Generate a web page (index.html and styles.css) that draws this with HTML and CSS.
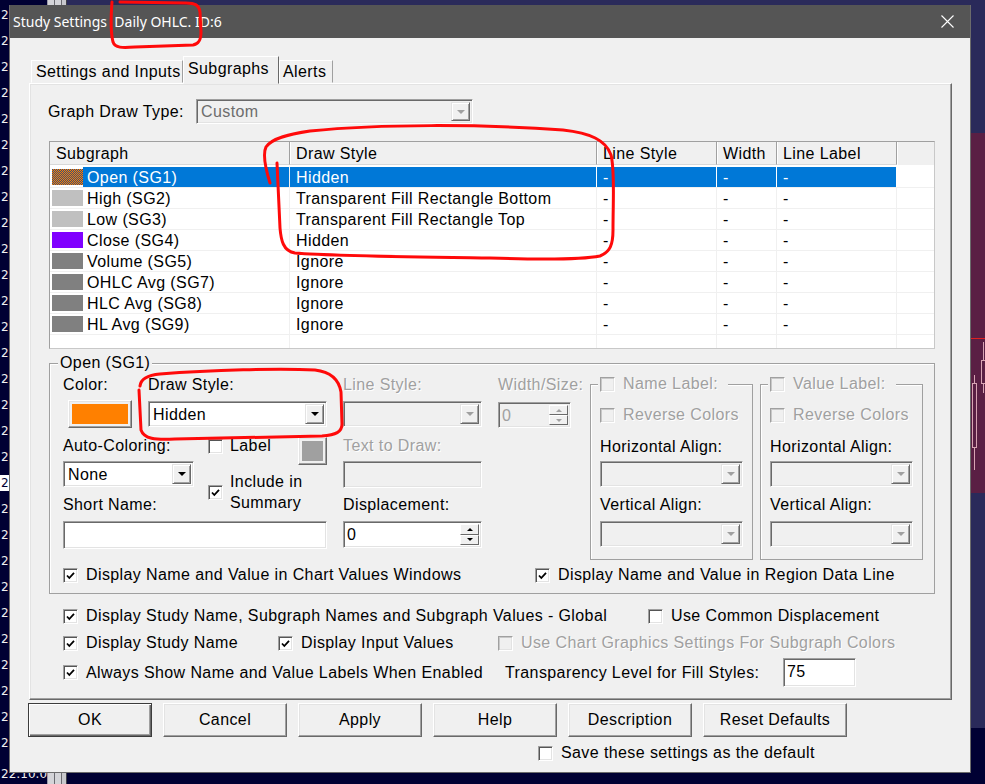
FILE: index.html
```html
<!DOCTYPE html>
<html lang="en">
<head>
    <meta charset="UTF-8">
    <title>Study Settings</title>
    <link rel="stylesheet" href="styles.css">
</head>
<body>
<div class="desktop">
    <div class="axis">
        <span>2</span><span>2</span><span>2</span><span>2</span><span>2</span><span>2</span>
        <span>2</span><span>2</span><span>2</span><span>2</span><span>2</span><span>2</span>
        <span>2</span><span>2</span><span>2</span><span>2</span><span>2</span><span>2</span>
        <span class="cur">2</span><span>2</span><span>2</span><span>2</span><span>2</span><span>2</span>
        <span>2</span><span>2</span><span>2</span><span>2</span><span>2</span>
        <span class="time">22:10.0</span>
    </div>
    <div class="splitter"></div>
    <div class="chart">
        <div class="ch-top"></div>
        <div class="ch-region">
            <svg class="candles" viewBox="0 0 918 360" preserveAspectRatio="none">
                <line x1="903" y1="205.5" x2="918" y2="205.5" stroke="#e02020" stroke-width="1"/>
                <line x1="907.5" y1="242" x2="907.5" y2="337" stroke="#d8a4b4" stroke-width="1"/>
                <rect x="905.5" y="250.5" width="4" height="64" fill="#5a1f44" stroke="#d8a4b4" stroke-width="1"/>
                <line x1="916.5" y1="209" x2="916.5" y2="260" stroke="#d8a4b4" stroke-width="1"/>
                <rect x="914.5" y="227.5" width="4" height="23" fill="#5a1f44" stroke="#d8a4b4" stroke-width="1"/>
            </svg>
        </div>
        <div class="ch-mid"></div>
        <div class="ch-axis"></div>
    </div>

    <div class="dialog">
        <div class="titlebar">
            <span class="title">Study Settings&nbsp; Daily OHLC. ID:6</span>
            <svg class="close" width="13" height="13" viewBox="0 0 13 13"><path d="M0.5 0.5 L12.5 12.5 M12.5 0.5 L0.5 12.5" stroke="#fff" stroke-width="1.1"/></svg>
        </div>
        <div class="dialog-body">
            <div class="tabs">
                <div class="tab tab-settings">Settings and Inputs</div>
                <div class="tab tab-sel">Subgraphs</div>
                <div class="tab tab-alerts">Alerts</div>
            </div>
            <div class="panel">
                <div class="draw-type">
                    <span class="dt-label">Graph Draw Type:</span>
                    <div class="combo combo-dis combo-dt"><span class="val">Custom</span><span class="drop"><i class="tri"></i></span></div>
                </div>

                <div class="list">
                    <div class="head">
                        <span class="hc c1">Subgraph</span>
                        <span class="hc c2">Draw Style</span>
                        <span class="hc c3">Line Style</span>
                        <span class="hc c4">Width</span>
                        <span class="hc c5">Line Label</span>
                    </div>
                    <div class="row sel">
                        <span class="cell c1"><i class="sw sw-open"></i><span class="nm">Open (SG1)</span></span>
                        <span class="cell c2">Hidden</span><span class="cell c3">-</span><span class="cell c4">-</span><span class="cell c5">-</span><span class="cell c6"></span>
                    </div>
                    <div class="row">
                        <span class="cell c1"><i class="sw sw-light"></i><span class="nm">High (SG2)</span></span>
                        <span class="cell c2">Transparent Fill Rectangle Bottom</span><span class="cell c3">-</span><span class="cell c4">-</span><span class="cell c5">-</span><span class="cell c6"></span>
                    </div>
                    <div class="row">
                        <span class="cell c1"><i class="sw sw-light"></i><span class="nm">Low (SG3)</span></span>
                        <span class="cell c2">Transparent Fill Rectangle Top</span><span class="cell c3">-</span><span class="cell c4">-</span><span class="cell c5">-</span><span class="cell c6"></span>
                    </div>
                    <div class="row">
                        <span class="cell c1"><i class="sw sw-purple"></i><span class="nm">Close (SG4)</span></span>
                        <span class="cell c2">Hidden</span><span class="cell c3">-</span><span class="cell c4">-</span><span class="cell c5">-</span><span class="cell c6"></span>
                    </div>
                    <div class="row">
                        <span class="cell c1"><i class="sw sw-gray"></i><span class="nm">Volume (SG5)</span></span>
                        <span class="cell c2">Ignore</span><span class="cell c3">-</span><span class="cell c4">-</span><span class="cell c5">-</span><span class="cell c6"></span>
                    </div>
                    <div class="row">
                        <span class="cell c1"><i class="sw sw-gray"></i><span class="nm">OHLC Avg (SG7)</span></span>
                        <span class="cell c2">Ignore</span><span class="cell c3">-</span><span class="cell c4">-</span><span class="cell c5">-</span><span class="cell c6"></span>
                    </div>
                    <div class="row">
                        <span class="cell c1"><i class="sw sw-gray"></i><span class="nm">HLC Avg (SG8)</span></span>
                        <span class="cell c2">Ignore</span><span class="cell c3">-</span><span class="cell c4">-</span><span class="cell c5">-</span><span class="cell c6"></span>
                    </div>
                    <div class="row">
                        <span class="cell c1"><i class="sw sw-gray"></i><span class="nm">HL Avg (SG9)</span></span>
                        <span class="cell c2">Ignore</span><span class="cell c3">-</span><span class="cell c4">-</span><span class="cell c5">-</span><span class="cell c6"></span>
                    </div>
                    <div class="row">
                        <span class="cell c1"></span><span class="cell c2"></span><span class="cell c3"></span><span class="cell c4"></span><span class="cell c5"></span><span class="cell c6"></span>
                    </div>
                </div>

                <div class="group">
                    <span class="group-title">Open (SG1)</span>
                    <div class="group-main">
                        <div class="col-a">
                            <span class="lbl lbl-color">Color:</span>
                            <span class="lbl lbl-style">Draw Style:</span>
                            <div class="color-btn"><i></i></div>
                            <div class="combo combo-style"><span class="val">Hidden</span><span class="drop"><i class="tri"></i></span></div>
                            <span class="lbl lbl-auto">Auto-Coloring:</span>
                            <div class="combo combo-auto"><span class="val">None</span><span class="drop"><i class="tri"></i></span></div>
                            <label class="chk chk-label"><span class="box"></span>Label</label>
                            <div class="gray-btn"><i></i></div>
                            <label class="chk chk-summary"><span class="box on"><svg viewBox="0 0 13 13"><path d="M3 6.5 L5.3 9 L10 3.8"/></svg></span><span>Include in<br>Summary</span></label>
                            <span class="lbl lbl-short">Short Name:</span>
                            <div class="field field-short"></div>
                        </div>
                        <div class="col-b">
                            <span class="lbl dis">Line Style:</span>
                            <div class="combo combo-dis combo-line"><span class="val"></span><span class="drop"><i class="tri"></i></span></div>
                            <span class="lbl dis lbl-text">Text to Draw:</span>
                            <div class="field field-dis field-text"></div>
                            <span class="lbl lbl-disp">Displacement:</span>
                            <div class="field spin spin-disp"><span class="val">0</span><span class="spin-btns"><i class="up"></i><i class="down"></i></span></div>
                        </div>
                        <div class="col-c">
                            <span class="lbl dis">Width/Size:</span>
                            <div class="field field-dis spin spin-width"><span class="val">0</span><span class="spin-btns"><i class="up"></i><i class="down"></i></span></div>
                        </div>
                        <div class="sub-box box-name">
                            <div class="sub-title"><label class="chk dis"><span class="box"></span>Name Label:</label></div>
                            <label class="chk dis sub-reverse"><span class="box"></span>Reverse Colors</label>
                            <span class="lbl sub-halign">Horizontal Align:</span>
                            <div class="combo combo-dis sub-combo"><span class="val"></span><span class="drop"><i class="tri"></i></span></div>
                            <span class="lbl sub-valign">Vertical Align:</span>
                            <div class="combo combo-dis sub-combo sub-combo-v"><span class="val"></span><span class="drop"><i class="tri"></i></span></div>
                        </div>
                        <div class="sub-box box-value">
                            <div class="sub-title"><label class="chk dis"><span class="box"></span>Value Label:</label></div>
                            <label class="chk dis sub-reverse"><span class="box"></span>Reverse Colors</label>
                            <span class="lbl sub-halign">Horizontal Align:</span>
                            <div class="combo combo-dis sub-combo"><span class="val"></span><span class="drop"><i class="tri"></i></span></div>
                            <span class="lbl sub-valign">Vertical Align:</span>
                            <div class="combo combo-dis sub-combo sub-combo-v"><span class="val"></span><span class="drop"><i class="tri"></i></span></div>
                        </div>
                    </div>
                    <div class="group-checks">
                        <label class="chk cell-chart"><span class="box on"><svg viewBox="0 0 13 13"><path d="M3 6.5 L5.3 9 L10 3.8"/></svg></span>Display Name and Value in Chart Values Windows</label>
                        <label class="chk"><span class="box on"><svg viewBox="0 0 13 13"><path d="M3 6.5 L5.3 9 L10 3.8"/></svg></span>Display Name and Value in Region Data Line</label>
                    </div>
                </div>

                <div class="opts">
                    <div class="opt-row opt-1">
                        <label class="chk cell-global"><span class="box on"><svg viewBox="0 0 13 13"><path d="M3 6.5 L5.3 9 L10 3.8"/></svg></span>Display Study Name, Subgraph Names and Subgraph Values - Global</label>
                        <label class="chk"><span class="box"></span>Use Common Displacement</label>
                    </div>
                    <div class="opt-row opt-2">
                        <label class="chk cell-study"><span class="box on"><svg viewBox="0 0 13 13"><path d="M3 6.5 L5.3 9 L10 3.8"/></svg></span>Display Study Name</label>
                        <label class="chk cell-input"><span class="box on"><svg viewBox="0 0 13 13"><path d="M3 6.5 L5.3 9 L10 3.8"/></svg></span>Display Input Values</label>
                        <label class="chk dis"><span class="box"></span>Use Chart Graphics Settings For Subgraph Colors</label>
                    </div>
                    <div class="opt-row opt-3">
                        <label class="chk cell-always"><span class="box on"><svg viewBox="0 0 13 13"><path d="M3 6.5 L5.3 9 L10 3.8"/></svg></span>Always Show Name and Value Labels When Enabled</label>
                        <span class="lbl lbl-trans">Transparency Level for Fill Styles:</span>
                        <div class="field field-trans">75</div>
                    </div>
                </div>
            </div>

            <div class="buttons">
                <button class="btn btn-ok">OK</button>
                <button class="btn">Cancel</button>
                <button class="btn">Apply</button>
                <button class="btn">Help</button>
                <button class="btn">Description</button>
                <button class="btn btn-reset">Reset Defaults</button>
            </div>
            <div class="save-row">
                <label class="chk"><span class="box"></span>Save these settings as the default</label>
            </div>
        </div>
    </div>

    <!-- red pen marks drawn over the screenshot -->
    <svg class="marks" width="985" height="784" viewBox="0 0 985 784">
        <path d="M112,2 C111,15 111,34 113,42 C115,48 122,48 135,47 L193,45 C199,44 201,40 201,32 L200,12 C199,5 195,3 186,3 L120,2"/>
        <path d="M270,183 C266,170 262,155 266,147 C272,138 290,134 310,131 C380,124 480,124 563,130 C590,133 606,140 611,155 C615,170 613,200 613,230 C613,245 610,252 600,256 C580,260 520,259 490,258 C420,257 330,256 295,253 C283,251 281,240 280,228 L277,163"/>
        <path d="M140,386 C141,378 148,375 160,374 C210,370 280,368 315,370 C332,372 339,380 341,392 L342,424 C342,432 336,435 322,436 L175,439 C155,440 144,439 141,430 L139,390"/>
    </svg>
</div>
</body>
</html>
```

FILE: styles.css
```css
* {
    box-sizing: border-box;
}
body {
    margin: 0;
    width: 985px;
    height: 784px;
    overflow: hidden;
    background: #000033;
    font-family: "Liberation Sans", Arial, sans-serif;
    font-size: 16px;
    letter-spacing: 0.4px;
    color: #000;
}
.desktop {
    position: relative;
    width: 985px;
    height: 784px;
    display: flex;
}

/* chart behind the dialog */
.axis {
    width: 47px;
    background: #000033;
    color: #f0f0f0;
    font-family: "DejaVu Sans", sans-serif;
    font-size: 12px;
    letter-spacing: 0;
    display: flex;
    flex-direction: column;
    padding-top: 2px;
}
.axis span {
    height: 26px;
    line-height: 26px;
    padding-left: 1px;
}
.axis .cur {
    background: #fff;
    color: #000033;
    height: 16px;
    line-height: 16px;
    margin: 5px 0;
}
.axis .time {
    margin-top: auto;
    height: 16px;
    line-height: 16px;
    margin-bottom: 2px;
}
.splitter {
    width: 20px;
    background: linear-gradient(to right, #9a9aa8 0 1px, #d4d4d8 1px 7px, #6a6a70 7px 8px, #d4d4d8 8px 14px, #6a6a70 14px 15px, #c8c8cc 15px 19px, #404048 19px 20px);
}
.chart {
    flex: 1;
    display: flex;
    flex-direction: column;
}
.ch-top {
    height: 133px;
    background: #2a2a5a;
}
.ch-region {
    height: 360px;
    background: #5a1f44;
}
.candles {
    display: block;
    width: 100%;
    height: 100%;
}
.ch-mid {
    height: 235px;
    background: #2a2a5a;
}
.ch-axis {
    flex: 1;
    background: #000033;
}

/* dialog window */
.dialog {
    position: absolute;
    left: 9px;
    top: 5px;
    width: 962px;
    height: 768px;
    background: #f0f0f0;
    border: 1px solid #6b6b6b;
    border-top: 0;
    display: flex;
    flex-direction: column;
}
.titlebar {
    height: 33px;
    background: #555555;
    color: #fff;
    font-family: "Noto Sans", sans-serif;
    font-size: 14px;
    letter-spacing: 0;
    display: flex;
    align-items: center;
    justify-content: space-between;
    padding: 0 16px 0 3px;
}
.close {
    display: block;
}
.dialog-body {
    flex: 1;
    padding: 18px 0 0 19px;
}

.tabs {
    display: flex;
    align-items: flex-end;
    height: 27px;
    margin-left: 2px;
}
.tab {
    height: 23px;
    line-height: 21px;
    padding-left: 4px;
    background: #f0f0f0;
    border: 1px solid;
    border-color: #fff #a0a0a0 transparent #fff;
    white-space: nowrap;
}
.tab-settings {
    width: 152px;
}
.tab-sel {
    width: 96px;
    height: 28px;
    line-height: 24px;
    margin-bottom: -1px;
    border-color: #fff #696969 transparent #fff;
    position: relative;
    z-index: 1;
}
.tab-alerts {
    width: 54px;
    padding-left: 3px;
}
.panel {
    width: 923px;
    height: 617px;
    border: 1px solid;
    border-color: #fff #696969 #696969 #fff;
    box-shadow: inset -1px -1px #a0a0a0, inset 1px 1px #e3e3e3;
    padding: 15px 0 0 19px;
}

.lbl {
    line-height: 20px;
    white-space: nowrap;
}
.dis,
.dis .lbl {
    color: #a0a0a0;
    text-shadow: 1px 1px #fff;
}

/* combo boxes and fields */
.combo {
    display: flex;
    height: 26px;
    background: #fff;
    border: 1px solid;
    border-color: #a0a0a0 #fff #fff #a0a0a0;
    box-shadow: inset 1px 1px #696969, inset -1px -1px #e3e3e3;
    padding: 2px;
}
.combo .val {
    flex: 1;
    line-height: 21px;
    padding-left: 2px;
    white-space: nowrap;
}
.drop {
    width: 19px;
    background: #f0f0f0;
    border: 1px solid;
    border-color: #e3e3e3 #696969 #696969 #e3e3e3;
    box-shadow: inset 1px 1px #fff, inset -1px -1px #a0a0a0;
    display: flex;
    align-items: center;
    justify-content: center;
}
.tri {
    width: 0;
    height: 0;
    border-left: 4px solid transparent;
    border-right: 4px solid transparent;
    border-top: 4px solid #000;
}
.combo-dis {
    background: #f0f0f0;
}
.combo-dis .val {
    color: #6d6d6d;
}
.combo-dis .tri {
    border-top-color: #a0a0a0;
}
.field {
    height: 28px;
    background: #fff;
    border: 1px solid;
    border-color: #a0a0a0 #fff #fff #a0a0a0;
    box-shadow: inset 1px 1px #696969, inset -1px -1px #e3e3e3;
    padding: 3px 3px;
    line-height: 20px;
}
.field-dis {
    background: #f0f0f0;
    color: #a0a0a0;
}
.spin {
    display: flex;
    padding: 2px 2px 2px 3px;
}
.spin .val {
    flex: 1;
    line-height: 21px;
}
.spin-btns {
    width: 19px;
    display: flex;
    flex-direction: column;
}
.spin-btns i {
    flex: 1;
    background: #f0f0f0;
    border: 1px solid;
    border-color: #fff #696969 #696969 #fff;
    display: flex;
    align-items: center;
    justify-content: center;
}
.spin-btns i::after {
    content: "";
    border-left: 3px solid transparent;
    border-right: 3px solid transparent;
}
.spin-btns .up::after {
    border-bottom: 3px solid #000;
}
.spin-btns .down::after {
    border-top: 3px solid #000;
}
.field-dis .spin-btns .up::after {
    border-bottom-color: #a0a0a0;
}
.field-dis .spin-btns .down::after {
    border-top-color: #a0a0a0;
}

/* check boxes */
.chk {
    display: flex;
    align-items: center;
    gap: 8px;
    line-height: 20px;
    white-space: nowrap;
}
.box {
    flex: none;
    width: 15px;
    height: 15px;
    background: #fff;
    border: 1px solid;
    border-color: #a0a0a0 #fff #fff #a0a0a0;
    box-shadow: inset 1px 1px #555, inset -1px -1px #e3e3e3;
}
.box svg {
    display: block;
    width: 13px;
    height: 13px;
}
.box path {
    fill: none;
    stroke: #000;
    stroke-width: 1.8;
}
.dis .box {
    background: #f0f0f0;
    box-shadow: inset 1px 1px #c8c8c8, inset -1px -1px #e3e3e3;
}

/* subgraph list */
.draw-type {
    display: flex;
    align-items: center;
    height: 25px;
}
.dt-label {
    width: 148px;
    margin-left: -1px;
}
.combo-dt {
    width: 277px;
    height: 25px;
}
.combo-dt .val {
    line-height: 20px;
}
.list {
    width: 886px;
    height: 208px;
    margin-top: 17px;
    background: #fff;
    border: 1px solid;
    border-color: #a0a0a0 #c8c8c8 #c8c8c8 #a0a0a0;
    overflow: hidden;
}
.head {
    display: flex;
    height: 25px;
    background: #f0f0f0;
    border-bottom: 2px solid #fff;
}
.hc {
    line-height: 24px;
    padding-left: 6px;
    border-right: 1px solid #a0a0a0;
    box-shadow: 1px 0 #fff;
    border-bottom: 1px solid #d8d8d8;
}
.c1 {
    width: 240px;
}
.c2 {
    width: 307px;
}
.c3 {
    width: 120px;
}
.c4 {
    width: 60px;
}
.c5 {
    width: 120px;
}
.c6 {
    flex: 1;
}
.row {
    display: flex;
    height: 21px;
    border-bottom: 1px solid #f0f0f0;
}
.cell {
    line-height: 22px;
    padding-left: 6px;
    border-right: 1px solid #f0f0f0;
    white-space: nowrap;
    overflow: hidden;
}
.cell.c1 {
    display: flex;
    align-items: center;
    padding-left: 0;
}
.cell.c6 {
    border-right: 0;
}
.sw {
    width: 31px;
    height: 16px;
    margin-left: 2px;
}
.sw-open {
    background: repeating-conic-gradient(#ff8000 0 25%, #3b4f78 0 50%) 0 0 / 2px 2px;
}
.sw-light {
    background: #c0c0c0;
}
.sw-purple {
    background: #8000ff;
}
.sw-gray {
    background: #808080;
}
.nm {
    flex: 1;
    height: 100%;
    padding-left: 4px;
}
.sel .nm,
.sel .c2,
.sel .c3,
.sel .c4,
.sel .c5 {
    background: #0078d7;
    color: #fff;
    border-right-color: #fff;
}

/* Open (SG1) group */
.group {
    margin-top: 14px;
    width: 886px;
    border: 1px solid #a0a0a0;
    box-shadow: inset 1px 1px #fff;
    display: flex;
    flex-direction: column;
    padding-bottom: 8px;
}
.group-title {
    align-self: flex-start;
    margin: -11px 0 0 8px;
    padding: 0 2px;
    line-height: 20px;
    background: #f0f0f0;
}
.group-main {
    display: flex;
    align-items: flex-start;
    margin-top: 2px;
    padding-left: 13px;
}
.col-a {
    width: 264px;
    display: grid;
    grid-template-columns: 85px 60px 90px 29px;
    grid-template-rows: 20px 5px 28px 8px 20px 5px 26px 8px 20px 6px 28px;
}
.lbl-color {
    grid-area: 1 / 1;
}
.lbl-style {
    grid-area: 1 / 2 / 2 / 5;
}
.color-btn {
    grid-area: 3 / 1;
    width: 64px;
    margin-left: 5px;
    padding: 3px;
    background: #f0f0f0;
    border: 1px solid;
    border-color: #fff #696969 #696969 #fff;
    box-shadow: inset -1px -1px #a0a0a0, inset 1px 1px #e3e3e3;
}
.color-btn i,
.gray-btn i {
    display: block;
    height: 100%;
    background: #ff8000;
}
.combo-style {
    grid-area: 3 / 2 / 4 / 5;
    width: 179px;
    align-self: center;
}
.lbl-auto {
    grid-area: 5 / 1 / 6 / 3;
}
.combo-auto {
    grid-area: 7 / 1 / 8 / 3;
    width: 131px;
}
.chk-label {
    grid-area: 5 / 3;
    gap: 7px;
}
.gray-btn {
    grid-area: 5 / 4 / 8 / 5;
    align-self: start;
    margin-top: 1px;
    height: 28px;
    padding: 3px;
    background: #f0f0f0;
    border: 1px solid;
    border-color: #fff #696969 #696969 #fff;
    box-shadow: inset -1px -1px #a0a0a0, inset 1px 1px #e3e3e3;
}
.gray-btn i {
    background: #a0a0a0;
}
.chk-summary {
    grid-area: 7 / 3 / 10 / 5;
    align-self: start;
    margin-top: 10px;
    gap: 7px;
    line-height: 21px;
}
.lbl-short {
    grid-area: 9 / 1 / 10 / 3;
}
.field-short {
    grid-area: 11 / 1 / 12 / 5;
}
.col-b {
    width: 139px;
    margin-left: 16px;
    display: flex;
    flex-direction: column;
}
.combo-line {
    margin-top: 6px;
}
.lbl-text {
    margin-top: 9px;
}
.field-text {
    margin-top: 5px;
    height: 27px;
}
.lbl-disp {
    margin-top: 7px;
}
.spin-disp {
    margin-top: 6px;
    height: 27px;
}
.col-c {
    width: 73px;
    margin-left: 16px;
    display: flex;
    flex-direction: column;
}
.spin-width {
    margin-top: 7px;
    height: 26px;
}
.sub-box {
    margin-top: 9px;
    border: 1px solid #a0a0a0;
    box-shadow: inset 1px 1px #fff;
    display: flex;
    flex-direction: column;
    align-items: flex-start;
    padding: 0 0 12px 9px;
}
.box-name {
    width: 163px;
    margin-left: 19px;
}
.box-value {
    width: 163px;
    margin-left: 7px;
}
.sub-title {
    margin: -11px 0 0 -2px;
    padding: 0 10px 0 2px;
    background: #f0f0f0;
}
.sub-reverse {
    margin-top: 11px;
}
.sub-halign {
    margin-top: 12px;
}
.sub-combo {
    width: 143px;
    margin-top: 4px;
}
.sub-valign {
    margin-top: 8px;
}
.sub-combo-v {
    margin-top: 6px;
}
.group-checks {
    display: flex;
    margin-top: 5px;
    padding-left: 13px;
}
.cell-chart {
    width: 472px;
}

/* options under the group */
.opts {
    margin-left: 14px;
}
.opt-row {
    display: flex;
    align-items: center;
    height: 20px;
}
.opt-1 {
    margin-top: 12px;
}
.opt-2 {
    margin-top: 7px;
}
.opt-3 {
    margin-top: 5px;
    height: 29px;
}
.cell-global {
    width: 585px;
}
.cell-study {
    width: 215px;
}
.cell-input {
    width: 220px;
}
.cell-always {
    width: 442px;
}
.lbl-trans {
    width: 278px;
}
.field-trans {
    width: 73px;
    height: 29px;
}

/* bottom buttons */
.buttons {
    display: flex;
    gap: 11px;
    margin: 3px 0 0 -1px;
}
.btn {
    width: 124px;
    height: 34px;
    padding: 0;
    font-family: "Liberation Sans", Arial, sans-serif;
    font-size: 16px;
    letter-spacing: 0.4px;
    color: #000;
    background: #f0f0f0;
    border: 1px solid;
    border-color: #fff #696969 #696969 #fff;
    box-shadow: inset -1px -1px #a0a0a0, inset 1px 1px #e3e3e3;
}
.btn-ok {
    border-color: #3c3c3c;
    box-shadow: inset 1px 1px #fff, inset -1px -1px #696969, inset -2px -2px #a0a0a0;
}
.btn-reset {
    width: 144px;
}
.save-row {
    margin-top: 6px;
    padding-left: 509px;
}

.marks {
    position: absolute;
    left: 0;
    top: 0;
    pointer-events: none;
}
.marks path {
    fill: none;
    stroke: #ff0a0a;
    stroke-width: 3;
    stroke-linecap: round;
    stroke-linejoin: round;
}
```
